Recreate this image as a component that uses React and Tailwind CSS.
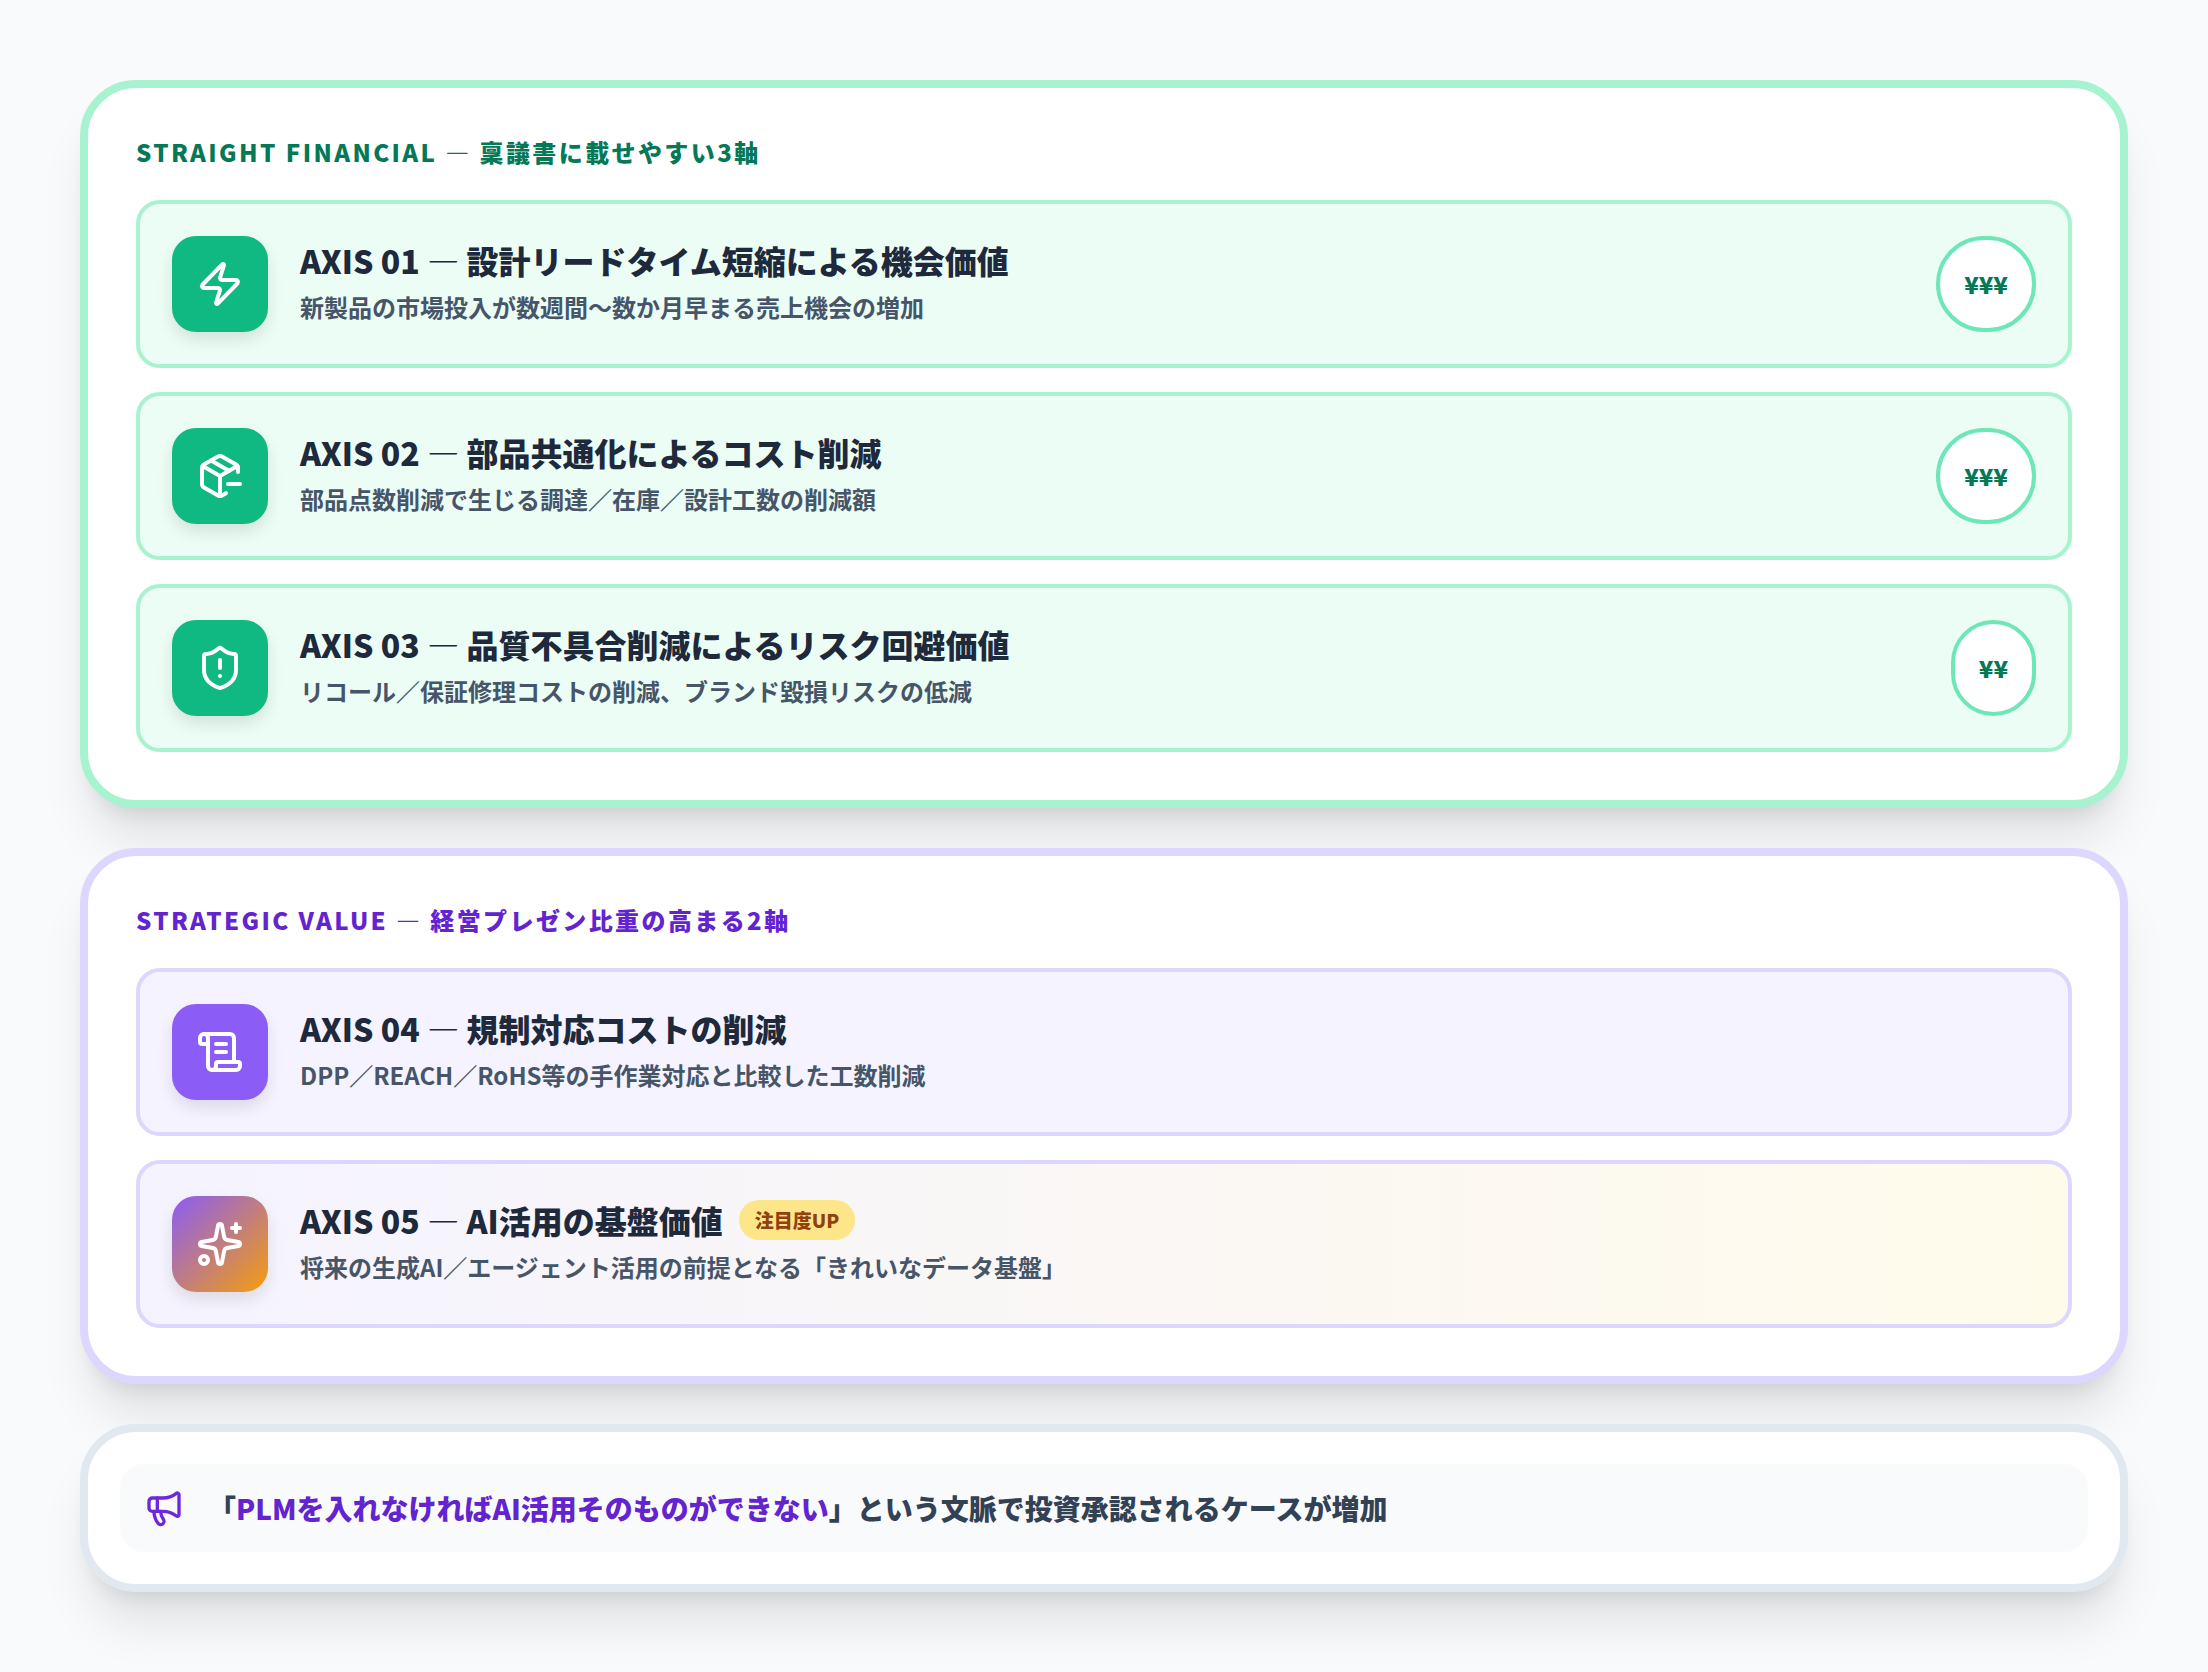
import React from 'react';
import { Zap, PackageMinus, ShieldAlert, ScrollText, Sparkles, Megaphone } from 'lucide-react';

const cardShadow = 'shadow-[0_40px_50px_-10px_rgba(0,0,0,0.1),0_16px_20px_-12px_rgba(0,0,0,0.1)]';

function Row({ tone, icon: Icon, iconBg, title, sub, badge, tag, bg }) {
  const border = tone === 'green' ? 'border-[#a7f3d0]' : 'border-[#ddd6fe]';
  return (
    <div className={`flex h-[168px] items-center gap-8 rounded-[24px] border-4 px-8 ${border} ${bg}`}>
      <div className={`flex h-24 w-24 shrink-0 items-center justify-center rounded-[24px] text-white shadow-[0_8px_16px_rgba(0,0,0,0.1)] ${iconBg}`}>
        <Icon size={48} strokeWidth={2} />
      </div>
      <div className="flex min-w-0 flex-1 flex-col">
        <div className="flex items-center gap-4 text-[32px] leading-[40px] font-black text-[#1e293b]">
          <span>{title}</span>
          {tag && <span className="rounded-full bg-[#fde68a] px-4 text-[19px] leading-[40px] font-black text-[#92400e]">{tag}</span>}
        </div>
        <div className="mt-[6px] text-[24px] leading-[42px] font-bold text-[#475569]">{sub}</div>
      </div>
      {badge && (
        <div className="flex h-24 shrink-0 items-center justify-center rounded-full border-4 border-[#6ee7b7] bg-white px-6 text-[24px] font-black text-[#047857]">
          {badge}
        </div>
      )}
    </div>
  );
}

function Card({ tone, label, children }) {
  const border = tone === 'green' ? 'border-[#a7f3d0]' : 'border-[#ddd6fe]';
  const color = tone === 'green' ? 'text-[#047857]' : 'text-[#6324cf]';
  return (
    <section className={`rounded-[56px] border-8 bg-white p-12 ${cardShadow} ${border}`}>
      <h2 className={`h-10 text-[24px] leading-[32px] font-black tracking-[0.1em] ${color}`}>{label}</h2>
      <div className="mt-6 flex flex-col gap-6">{children}</div>
    </section>
  );
}

export default function App() {
  return (
    <div lang="ja" className="flex min-h-[1672px] flex-col gap-10 bg-[#f8fafc] p-20 font-['Noto_Sans_CJK_JP','Noto_Sans',sans-serif]">
      <Card tone="green" label="STRAIGHT FINANCIAL — 稟議書に載せやすい3軸">
        <Row tone="green" bg="bg-[#ecfdf5]" icon={Zap} iconBg="bg-[#10b981]" title="AXIS 01 — 設計リードタイム短縮による機会価値" sub="新製品の市場投入が数週間〜数か月早まる売上機会の増加" badge="¥¥¥" />
        <Row tone="green" bg="bg-[#ecfdf5]" icon={PackageMinus} iconBg="bg-[#10b981]" title="AXIS 02 — 部品共通化によるコスト削減" sub="部品点数削減で生じる調達／在庫／設計工数の削減額" badge="¥¥¥" />
        <Row tone="green" bg="bg-[#ecfdf5]" icon={ShieldAlert} iconBg="bg-[#10b981]" title="AXIS 03 — 品質不具合削減によるリスク回避価値" sub="リコール／保証修理コストの削減、ブランド毀損リスクの低減" badge="¥¥" />
      </Card>
      <Card tone="violet" label="STRATEGIC VALUE — 経営プレゼン比重の高まる2軸">
        <Row tone="violet" bg="bg-[#f5f3ff]" icon={ScrollText} iconBg="bg-[#8b5cf6]" title="AXIS 04 — 規制対応コストの削減" sub="DPP／REACH／RoHS等の手作業対応と比較した工数削減" />
        <Row tone="violet" bg="bg-[linear-gradient(90deg,#f5f3ff,#fffbeb)]" icon={Sparkles} iconBg="bg-[linear-gradient(135deg,#8b5cf6,#f59e0b)]" title="AXIS 05 — AI活用の基盤価値" tag="注目度UP" sub="将来の生成AI／エージェント活用の前提となる「きれいなデータ基盤」" />
      </Card>
      <section className={`rounded-[56px] border-8 border-[#e2e8f0] bg-white p-8 ${cardShadow}`}>
        <div className="flex h-[88px] items-center gap-6 rounded-[24px] bg-[#f8fafc] px-6">
          <Megaphone size={40} strokeWidth={2} className="shrink-0 text-[#6d28d9]" />
          <p className="text-[28px] font-black text-[#334155]">
            「<span className="text-[#6324cf]">PLMを入れなければAI活用そのものができない</span>」という文脈で投資承認されるケースが増加
          </p>
        </div>
      </section>
    </div>
  );
}
